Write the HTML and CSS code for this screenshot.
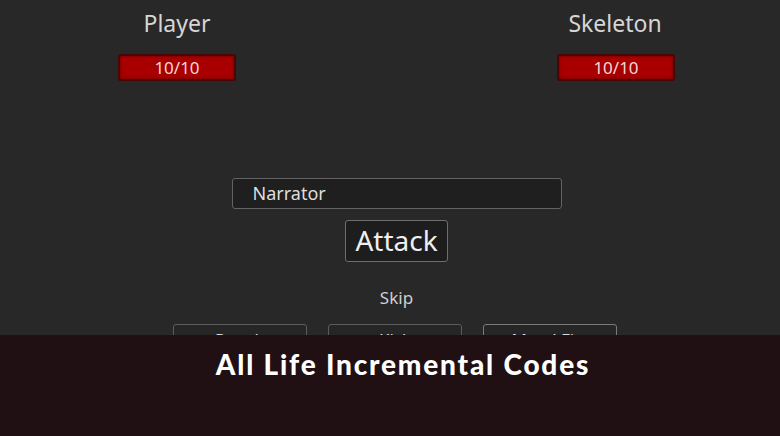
FILE: index.html
```html
<!DOCTYPE html>
<html lang="en">
<head>
  <meta charset="UTF-8" />
  <title>All Life Incremental Codes</title>
  <link rel="stylesheet" href="styles.css">
</head>
<body>

  <div class="screen">
    <div class="fighters">
      <div class="fighter">
        <div class="fighter-name">Player</div>
        <div class="hp-bar">10/10</div>
      </div>
      <div class="fighter">
        <div class="fighter-name">Skeleton</div>
        <div class="hp-bar">10/10</div>
      </div>
    </div>

    <div class="battle">
      <div class="narrator">Narrator</div>
      <div class="attack">Attack</div>
      <div class="skip">Skip</div>
      <div class="moves">
        <div class="move">Punch</div>
        <div class="move">Kick</div>
        <div class="move">Metal Fist</div>
      </div>
    </div>
  </div>

  <div class="banner">All Life Incremental Codes</div>

</body>
</html>
```

FILE: styles.css
```css
body {
  margin: 0; width: 780px; height: 436px; overflow: hidden;
  background: #282828;
  font-family: "Noto Sans", "Open Sans", sans-serif;
}
/* game view, cut off by the title strip */
.screen { height: 335px; overflow: hidden; }
.fighters {
  display: flex; gap: 321px; padding: 7px 0 0 118px;
}
.fighter {
  width: 118px;
  display: flex; flex-direction: column; align-items: center;
}
.fighter-name {
  color: #d6d6d6; font-size: 23px; line-height: 32px;
  white-space: nowrap;
}
.fighter:last-child .fighter-name { margin-left: -2px; }
.hp-bar {
  margin-top: 15px; width: 118px; height: 27px; box-sizing: border-box;
  background: #a80000; border: 2px solid #4a0606; border-radius: 2px;
  box-shadow: inset 0 0 3px #600000;
  color: #f3d7d7; font-size: 17px; line-height: 23px; text-align: center;
}
.battle {
  display: flex; flex-direction: column; align-items: center;
  padding: 97px 0 0 13px;
}
.narrator {
  width: 330px; height: 31px; box-sizing: border-box;
  background: #1f1f1f; border: 1px solid #636363; border-radius: 3px;
  color: #dedede; font-size: 18px; line-height: 29px; padding-left: 20px;
}
.attack {
  margin-top: 11px; height: 42px; box-sizing: border-box;
  padding: 0 9px;
  background: #1d1d1d; border: 1px solid #6e6e6e; border-radius: 3px;
  color: #efefef; font-size: 28px; line-height: 39px;
}
.skip {
  margin-top: 24px; color: #cfcfcf; font-size: 17px; line-height: 24px;
}
.moves {
  display: flex; gap: 21px; margin-top: 14px; margin-left: -3px;
}
.move {
  width: 134px; height: 34px; box-sizing: border-box;
  background: #262626; border: 1px solid #5c5c5c; border-radius: 3px;
  color: #dcdcdc; font-size: 17px; line-height: 30px; text-align: center;
}
.move:last-child { border-color: #7a7a7a; }
.banner {
  height: 101px; box-sizing: border-box;
  background: #200f13;
  color: #ffffff; font-family: "Lato", sans-serif; font-weight: 900;
  font-size: 28px; letter-spacing: 1.8px;
  text-align: center; padding: 12px 0 0 26px;
}
```
